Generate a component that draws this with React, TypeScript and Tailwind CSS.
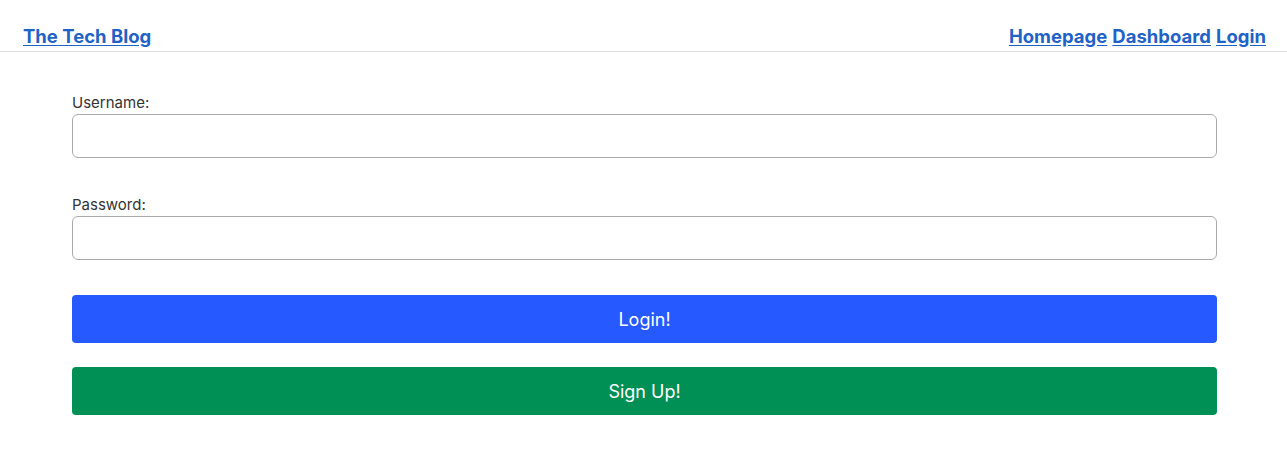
import { useState } from 'react';

export default function App() {
  const [username, setUsername] = useState('');
  const [password, setPassword] = useState('');

  return (
    <div className="min-h-[468px] bg-white font-['Inter',sans-serif] text-[#333]">
      {/* Header */}
      <header className="flex items-end justify-between border-b border-[#ddd] pl-[23px] pr-[21px] pt-[24px] pb-[3px]">
        <a href="#" className="text-[18.5px] leading-[24px] font-bold text-[#1f63c6] underline underline-offset-[2px]">
          The Tech Blog
        </a>
        <nav className="flex gap-[5px] text-[18.5px] leading-[24px] font-bold text-[#1f63c6]">
          <a href="#" className="underline underline-offset-[2px]">Homepage</a>
          <a href="#" className="underline underline-offset-[2px]">Dashboard</a>
          <a href="#" className="underline underline-offset-[2px]">Login</a>
        </nav>
      </header>

      {/* Login form */}
      <form className="ml-[72px] w-[1145px] pt-[41px]" onSubmit={(e) => e.preventDefault()}>
        <label className="block text-[15px] leading-[20px] text-[#333]">Username:</label>
        <input
          value={username}
          onChange={(e) => setUsername(e.target.value)}
          className="mt-[1px] block h-[44px] w-full rounded-[6px] border border-[#aaa] px-3 text-[15px] outline-none"
        />

        <label className="mt-[37px] block text-[15px] leading-[20px] text-[#333]">Password:</label>
        <input
          type="password"
          value={password}
          onChange={(e) => setPassword(e.target.value)}
          className="mt-[1px] block h-[44px] w-full rounded-[6px] border border-[#aaa] px-3 text-[15px] outline-none"
        />

        <button className="mt-[35px] block h-[48px] w-full rounded-[4px] bg-[#2659ff] text-[18px] text-white">
          Login!
        </button>
        <button className="mt-[24px] block h-[48px] w-full rounded-[4px] bg-[#008f55] text-[18px] text-white">
          Sign Up!
        </button>
      </form>
    </div>
  );
}
